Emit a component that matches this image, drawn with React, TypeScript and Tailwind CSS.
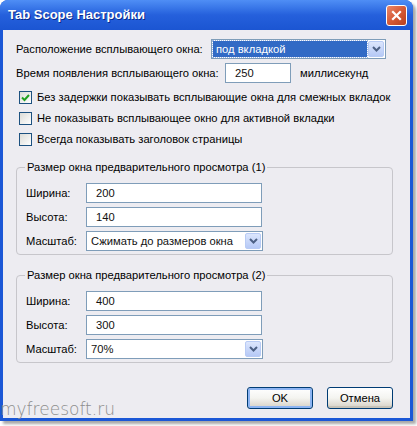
import type { ReactNode } from "react";

const font = { fontFamily: '"Liberation Sans", Arial, sans-serif' };

function Chevron() {
  return (
    <svg width="9" height="6" viewBox="0 0 9 6" fill="none" stroke="#4d6185" strokeWidth="2">
      <path d="M1 1l3.5 3.5L8 1" />
    </svg>
  );
}

function Select({ value, width, selected }: { value: string; width: string; selected?: boolean }) {
  return (
    <div className={`${width} h-[20px] border border-[#7f9db9] bg-white flex items-stretch p-[1px]`}>
      <div className="flex-1 flex items-center min-w-0">
        {selected ? (
          <div className="h-full w-full bg-[#316ac5] text-white pl-[3px] flex items-center outline-1 outline-dotted outline-[#a0b8e0]">
            {value}
          </div>
        ) : (
          <span className="pl-[3px] text-[#111]">{value}</span>
        )}
      </div>
      <div className="w-[16px] ml-[1px] rounded-[2px] border border-[#b8cbf5] bg-gradient-to-b from-[#dce6fd] to-[#b6c9f6] flex items-center justify-center">
        <Chevron />
      </div>
    </div>
  );
}

function Input({ value, width }: { value: string; width: string }) {
  return (
    <div className={`${width} h-[20px] border border-[#7f9db9] bg-white flex items-center pl-[9px] text-[#111]`}>
      {value}
    </div>
  );
}

function Checkbox({ checked, label }: { checked?: boolean; label: string }) {
  return (
    <div className="h-[21px] flex items-center pl-[3px]">
      <div className="w-[13px] h-[13px] shrink-0 border border-[#1c5180] bg-gradient-to-br from-[#dcdcd7] to-white flex items-center justify-center">
        {checked && (
          <svg width="9" height="9" viewBox="0 0 9 9" fill="none" stroke="#21a121" strokeWidth="2">
            <path d="M1 4.5l2.5 2.5L8 2" />
          </svg>
        )}
      </div>
      <span className="ml-[5px]">{label}</span>
    </div>
  );
}

function Field({ label, children }: { label: string; children: ReactNode }) {
  return (
    <div className="h-[20px] flex items-center">
      <span className="w-[61px] pl-[1px]">{label}</span>
      {children}
    </div>
  );
}

function Group({ title, children }: { title: string; children: ReactNode }) {
  return (
    <fieldset className="w-[377px] border border-[#c7c6cb] rounded-[4px] pl-[8px] pb-[3px]">
      <legend className="px-[2px] leading-[14px]">{title}</legend>
      <div className="mt-[9px] flex flex-col gap-[4px]">{children}</div>
    </fieldset>
  );
}

function Button({ label, primary }: { label: string; primary?: boolean }) {
  return (
    <div
      className={`w-[66px] h-[22px] rounded-[3px] border border-[#003c74] bg-gradient-to-b from-white via-[#f4f4f0] to-[#d6d0c5] flex items-center justify-center ${
        primary ? "shadow-[inset_0_0_0_2px_#8cb4f2]" : "shadow-[inset_0_-2px_0_#c8c3b8]"
      }`}
    >
      {label}
    </div>
  );
}

export default function App() {
  return (
    <div className="w-[417px] h-[426px] bg-white relative overflow-hidden text-[11.2px] text-black whitespace-nowrap" style={font}>
      <div className="w-[413px] h-[421px] rounded-t-[8px] bg-[#1b57d6] flex flex-col shadow-[3px_3px_3px_rgba(0,0,0,0.35)]">
        {/* title bar */}
        <div className="h-[30px] rounded-t-[8px] bg-gradient-to-b from-[#4f8ef5] via-[#2560dc] to-[#1b55d2] flex items-center justify-between pl-[8px] pr-[6px]">
          <span className="text-white font-bold text-[13px] [text-shadow:1px_1px_0_#0a2a8a]">Tab Scope Настройки</span>
          <div className="w-[21px] h-[21px] rounded-[3px] border border-white bg-gradient-to-br from-[#e8876a] via-[#d65a36] to-[#b8401f] flex items-center justify-center">
            <svg width="11" height="11" viewBox="0 0 11 11" stroke="white" strokeWidth="2.2" strokeLinecap="square">
              <path d="M2 2l7 7M9 2l-7 7" />
            </svg>
          </div>
        </div>

        {/* client area */}
        <div className="flex-1 mx-[3px] mb-[3px] bg-[#edecf1] pl-[13px] pt-[9px] flex flex-col">
          <div className="h-[20px] flex items-center">
            <span className="w-[195px]">Расположение всплывающего окна:</span>
            <Select value="под вкладкой" width="w-[175px]" selected />
          </div>
          <div className="h-[20px] mt-[4px] flex items-center">
            <span className="w-[209px]">Время появления всплывающего окна:</span>
            <Input value="250" width="w-[66px]" />
            <span className="ml-[9px]">миллисекунд</span>
          </div>
          <div className="mt-[4px] flex flex-col">
            <Checkbox checked label="Без задержки показывать всплывающие окна для смежных вкладок" />
            <Checkbox label="Не показывать всплывающее окно для активной вкладки" />
            <Checkbox label="Всегда показывать заголовок страницы" />
          </div>

          <div className="mt-[10px]">
            <Group title="Размер окна предварительного просмотра (1)">
              <Field label="Ширина:">
                <Input value="200" width="w-[176px]" />
              </Field>
              <Field label="Высота:">
                <Input value="140" width="w-[176px]" />
              </Field>
              <Field label="Масштаб:">
                <Select value="Сжимать до размеров окна" width="w-[177px]" />
              </Field>
            </Group>
          </div>

          <div className="mt-[13px]">
            <Group title="Размер окна предварительного просмотра (2)">
              <Field label="Ширина:">
                <Input value="400" width="w-[176px]" />
              </Field>
              <Field label="Высота:">
                <Input value="300" width="w-[176px]" />
              </Field>
              <Field label="Масштаб:">
                <Select value="70%" width="w-[177px]" />
              </Field>
            </Group>
          </div>

          <div className="mt-[24px] w-[377px] flex justify-end gap-[14px]">
            <Button label="OK" primary />
            <Button label="Отмена" />
          </div>
        </div>
      </div>

      {/* watermark */}
      <span
        className="absolute left-0 top-[398px] text-[17px] leading-[22px] text-[#8e8e8e] font-light"
        style={{ fontFamily: '"DejaVu Sans", sans-serif' }}
      >
        myfreesoft.ru
      </span>
    </div>
  );
}
